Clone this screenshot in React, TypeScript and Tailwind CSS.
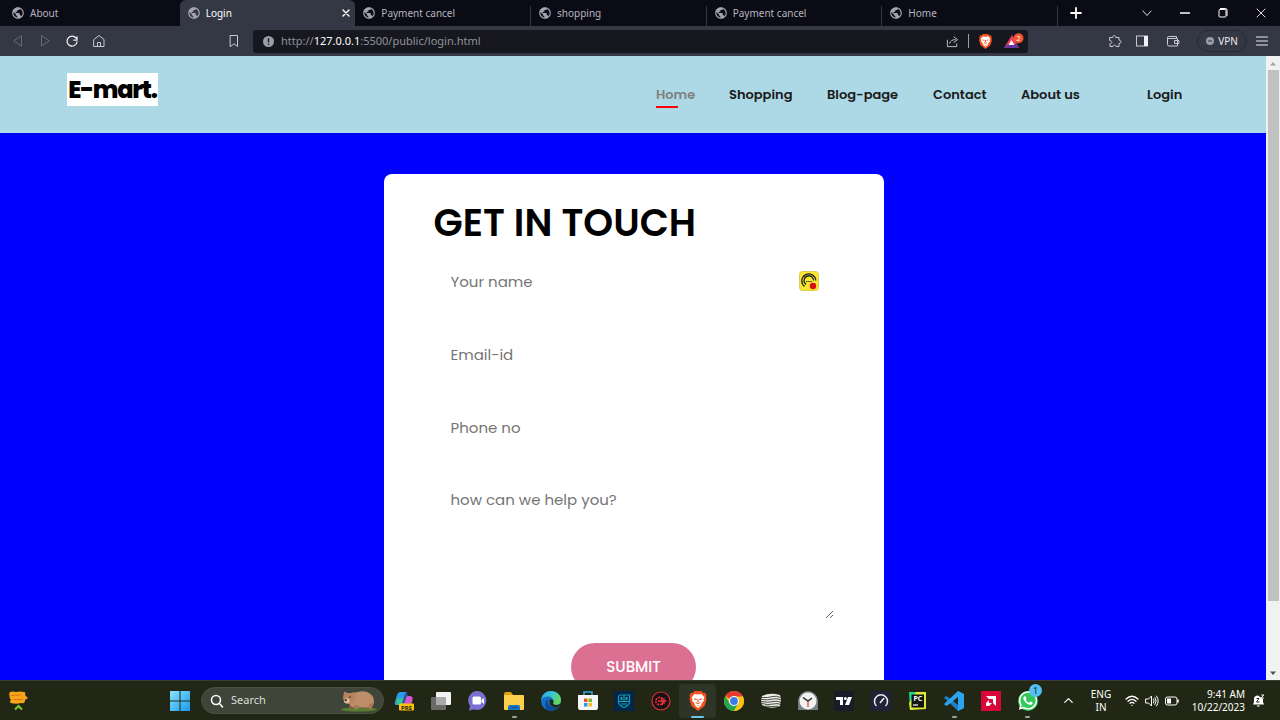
import React from 'react';
import { MdPublic } from 'react-icons/md';
import { FaWhatsapp } from 'react-icons/fa';

const tabs = ['About', 'Login', 'Payment cancel', 'shopping', 'Payment cancel', 'Home'];

const links = [
  { label: 'Home', width: 'w-[73px]' },
  { label: 'Shopping', width: 'w-[98px]' },
  { label: 'Blog-page', width: 'w-[106px]' },
  { label: 'Contact', width: 'w-[88px]' },
  { label: 'About us', width: 'w-[126px]' },
  { label: 'Login', width: 'w-[36px]' },
];

function Line({ d, size = 14, box = 14, width = 1 }: { d: string; size?: number; box?: number; width?: number }) {
  return (
    <svg width={size} height={size} viewBox={`0 0 ${box} ${box}`} fill="none" stroke="currentColor" strokeWidth={width} strokeLinejoin="round" strokeLinecap="round">
      <path d={d} />
    </svg>
  );
}

function IconButton({ label, className, children }: { label: string; className?: string; children: React.ReactNode }) {
  return (
    <button type="button" aria-label={label} className={`flex shrink-0 items-center justify-center ${className ?? ''}`}>
      {children}
    </button>
  );
}

function BraveLion({ size }: { size: number }) {
  return (
    <svg width={size} height={size} viewBox="0 0 20 20">
      <path d="M6.5 0h7l1.800 2 1.700-.2L18.500 4.500l-.5 1.700.6 2L16.500 15 10 20 3.500 15 1.400 8.200l.6-2-.5-1.700L3 1.800 4.700 2z" fill="#f4511e" />
      <path d="M6.500 3 10 3.600 13.500 3 16.500 6.500 15.500 8l.3 2-2.300 2.500-.3 1.800L10 17.200 6.800 14.300l-.3-1.800L4.200 10l.3-2-1-1.500z" fill="#fff" />
      <path d="M5.800 7.200 9 7.900 8.600 9 6.600 8.700zM14.200 7.200 11 7.900 11.400 9l2-.3zM9.600 8h.8l.3 3-1.400 0zM7.600 11 10 12l2.400-1L12 12.300l-2 .8-2-.8zM8.800 14.500h2.400L10 15.500z" fill="#f4511e" />
    </svg>
  );
}

function TabStrip() {
  return (
    <div className="flex h-[26px] shrink-0 items-stretch bg-[#0b0b16] text-[#b5b5bf]">
      <div role="tablist" className="box-content flex w-[1054px] shrink items-stretch pl-1">
        {tabs.map((title, i) => {
          const active = i === 1;
          return (
            <div
              key={i}
              role="tab"
              aria-selected={active}
              className={
                active
                  ? 'flex min-w-0 flex-1 items-center rounded-t-md bg-[#343744] pr-[5px] pl-[7px] text-white'
                  : i === 0
                    ? 'flex min-w-0 flex-1 items-center pr-[5px] pl-[7px]'
                    : 'flex min-w-0 flex-1 items-center bg-[linear-gradient(#343744,#343744)] bg-[length:1px_20px] bg-right-bottom bg-no-repeat pr-[5px] pl-[7px]'
              }
            >
              <MdPublic size={14} className="shrink-0 text-[#a3a5b3]" />
              <span className="ml-[5px] flex-1 truncate text-[10px]">{title}</span>
              {active && (
                <IconButton label="Close tab" className="w-2">
                  <Line d="M1 1 7 7M7 1 1 7" size={8} box={8} width={1.4} />
                </IconButton>
              )}
            </div>
          );
        })}
      </div>
      <IconButton label="New tab" className="w-9 text-white">
        <Line d="M7 2V12M2 7H12" size={14} width={1.8} />
      </IconButton>
      <div className="ml-auto flex text-[#dcdce2]">
        <IconButton label="Search tabs" className="w-[38px]">
          <Line d="M3 5 7 9.500 11 5" />
        </IconButton>
        <IconButton label="Minimize" className="w-[38px] text-white">
          <Line d="M2.500 7H11.500" width={1.3} />
        </IconButton>
        <IconButton label="Restore" className="w-[38px] text-white">
          <Line d="M4 3.500H9Q10 3.500 10 4.500V10Q10 11 9 11H4Q3 11 3 10V4.500Q3 3.500 4 3.500M4.500 2.500H9.500Q11 2.500 11 4V9.500" />
        </IconButton>
        <IconButton label="Close" className="w-[38px]">
          <Line d="M3 3 11 11M11 3 3 11" />
        </IconButton>
      </div>
    </div>
  );
}

function Toolbar() {
  return (
    <div className="flex h-[30px] shrink-0 items-center bg-[#343744] text-[#c8c9d2]">
      <IconButton label="Back" className="ml-[5px] w-[26px] text-[#686a76]">
        <Line d="M10.500 2V12L3 7Z" />
      </IconButton>
      <IconButton label="Forward" className="w-[27px] text-[#686a76]">
        <Line d="M3.500 2V12L11 7Z" />
      </IconButton>
      <IconButton label="Reload" className="w-[27px] text-[#eeeef2]">
        <Line d="M11 4A5 5 0 1 0 12 8M12 3V6.200H8.800" width={1.3} />
      </IconButton>
      <IconButton label="Home page" className="w-[27px]">
        <Line d="M2 5.500 7 1.500 12 5.500V12.500H2ZM5.500 12.500V8.500H8.500V12.500" />
      </IconButton>
      <IconButton label="Bookmark" className="ml-[108px] w-7">
        <Line d="M3.500 1.500H10.500V12.500L7 9.800 3.500 12.500Z" />
      </IconButton>
      <div className="ml-[5px] flex h-[23px] min-w-0 flex-1 items-center rounded-[3px] bg-[#17181f]">
        <svg width="13" height="13" viewBox="0 0 13 13" className="ml-[9px] shrink-0">
          <circle cx="6.500" cy="6.500" r="5.500" fill="#9c9ea9" />
          <path d="M6.500 3.200V7.400M6.500 8.800V10" stroke="#17181f" strokeWidth="1.400" />
        </svg>
        <a href="http://127.0.0.1:5500/public/login.html" className="ml-[6px] flex-1 truncate text-[11px] text-[#8f919c]">
          http://<span className="text-white">127.0.0.1</span>:5500/public/login.html
        </a>
        <IconButton label="Share" className="w-5">
          <Line d="M1.500 5.500V12.500H11.500V9.500M4 9C4.500 6 7 5 10 5M8.500 2 12.500 5 8.500 8" size={13} />
        </IconButton>
        <span className="mx-[6px] h-[14px] w-px bg-[#9c9ea9]" />
        <IconButton label="Brave Shields" className="w-5">
          <BraveLion size={15} />
        </IconButton>
        <IconButton label="Brave Rewards" className="mr-[3px] ml-2 w-[22px]">
          <svg width="20" height="16" viewBox="0 0 20 16">
            <path d="M8 2 15 15H0Z" fill="#ee3f5c" />
            <path d="M0 15 4 11H13L15 15Z" fill="#65359f" />
            <path d="M7.500 7 10.500 12H4.500Z" fill="#fff" />
            <circle cx="14.500" cy="5.300" r="5" fill="#f4552e" />
            <text x="14.500" y="8" textAnchor="middle" fontSize="7" fill="#fff">2</text>
          </svg>
        </IconButton>
      </div>
      <IconButton label="Extensions" className="ml-[74px] w-[26px]">
        <Line d="M2 3.500H4.700C4.500 1 8 1 7.800 3.500H11V6.200C13.600 6 13.600 9.600 11 9.400V12.500H8C8 10.500 5 10.500 5 12.500H2V9.500C4.500 9.500 4.500 6.500 2 6.500Z" />
      </IconButton>
      <IconButton label="Sidebar" className="w-[28px]">
        <svg width="14" height="14" viewBox="0 0 14 14">
          <rect x="1.500" y="2" width="11" height="10" fill="none" stroke="currentColor" />
          <path d="M9 2H13V12H9Z" fill="#f0f0f5" />
        </svg>
      </IconButton>
      <IconButton label="Wallet" className="w-[34px]">
        <Line d="M10.500 4V2.500H2.500Q1.500 2.500 1.500 3.500V10.500Q1.500 12 3 12H11.500V4.500H2M12.500 6.500H8.500V9.500H12.500Z" />
      </IconButton>
      <button type="button" className="ml-[7px] flex h-[22px] w-[50px] items-center justify-center gap-1 rounded-full border border-[#272a34] text-[10px] text-[#ededf2]">
        <svg width="8" height="8" viewBox="0 0 8 8">
          <circle cx="4" cy="4" r="4" fill="#9a9cab" />
          <path d="M2 4H6" stroke="#343744" />
        </svg>
        VPN
      </button>
      <IconButton label="Menu" className="mr-[5px] ml-[2px] w-[26px] text-[#ededf2]">
        <Line d="M1.500 3H12.500M1.500 7H12.500M1.500 11H12.500" />
      </IconButton>
    </div>
  );
}

function LoginPage() {
  const field =
    'block w-full resize-none border-0 bg-transparent px-[17px] text-[15px] text-black outline-none placeholder:text-[#757575] placeholder:opacity-100';
  return (
    <div className="min-w-0 flex-1 overflow-hidden bg-[#0000ff] font-['Poppins','Inter',sans-serif]">
      <header className="flex h-[77px] items-center justify-between bg-[#add8e6] pr-[83px] pl-[67px]">
        <a href="#home" className="mb-[11px] flex h-[33px] w-[91px] items-center justify-center bg-white text-[24px] leading-[33px] font-extrabold tracking-tighter whitespace-nowrap text-black">
          E-mart.
        </a>
        <nav>
          <ul className="flex text-[13px] leading-[21px] font-semibold whitespace-nowrap text-[#1a1a1a]">
            {links.map((link, i) => (
              <li key={link.label} className={link.width}>
                <a href={`#${link.label}`} className={i === 0 ? 'relative text-[#808080]' : ''}>
                  {link.label}
                  {i === 0 && <span className="absolute -bottom-[4px] left-0 h-[2px] w-[22px] bg-[#ff0000]" />}
                </a>
              </li>
            ))}
          </ul>
        </nav>
      </header>
      <main className="flex justify-center pt-[41px] pl-px">
        <form className="w-full max-w-[500px] rounded-lg bg-white px-[50px] pt-[19px] pb-12" onSubmit={(e) => e.preventDefault()}>
          <h1 className="text-[38px] leading-[60px] font-semibold whitespace-nowrap text-black">GET IN TOUCH</h1>
          <div className="mt-1 flex flex-col gap-6">
            <div className="relative">
              <input aria-label="Your name" type="text" placeholder="Your name" className={`${field} h-[49px]`} />
              <svg width="20" height="20" viewBox="0 0 20 20" className="absolute top-[14px] right-[15px]">
                <rect x=".5" y=".5" width="19" height="19" rx="3" fill="#f9e82e" stroke="#dccb4c" />
                <path d="M5.500 15.500A7 7 0 1 1 16.800 9.500M7 13.500A4.800 4.800 0 1 1 14.600 9.500" fill="none" stroke="#222" strokeWidth="1.300" />
                <path d="M7 10.500H13" stroke="#333" strokeDasharray="1.500 .7" />
                <circle cx="14" cy="15" r="3.200" fill="#d90d12" />
              </svg>
            </div>
            <input aria-label="Email-id" type="email" placeholder="Email-id" className={`${field} h-[49px]`} />
            <input aria-label="Phone no" type="tel" placeholder="Phone no" className={`${field} h-[49px]`} />
            <textarea aria-label="how can we help you?" placeholder="how can we help you?" className={`${field} h-[143px] resize! py-3 leading-6`} />
          </div>
          <button type="submit" className="mx-auto mt-6 block h-12 w-[125px] rounded-full bg-[#db7093] text-[15px] font-medium text-white">
            SUBMIT
          </button>
        </form>
      </main>
    </div>
  );
}

function ScrollRail() {
  return (
    <div className="flex w-[14px] shrink-0 flex-col items-center bg-[#f1f1f1]">
      <svg width="14" height="14" viewBox="0 0 14 14"><path d="M4 9.500 7 6 10 9.500Z" fill="#a3a3a3" /></svg>
      <div className="w-[11px] flex-[531] bg-[#c1c1c1]" />
      <div className="flex-[65]" />
      <svg width="14" height="14" viewBox="0 0 14 14"><path d="M4 5.500 7 9 10 5.500Z" fill="#505050" /></svg>
    </div>
  );
}

const apps: { name: string; art: React.ReactNode; mark?: string }[] = [
  {
    name: 'Copilot',
    art: (
      <>
        <path d="M6 1H13L9 14H2Q0 14 1 11L3 4Q4 1 6 1Z" fill="#2e9be8" />
        <path d="M2 8 4 14H9L11 7Z" fill="#36c68f" />
        <path d="M12 1 15 6 12 12H8L11 3Z" fill="#294f9e" />
        <path d="M13 5H16Q20 5 18 11L16 15H9Z" fill="#d159cc" />
        <rect x="5" y="12.500" width="15" height="7" rx="1" fill="#fdc20d" />
        <text x="12.500" y="18.500" textAnchor="middle" fontSize="6" fontWeight="700" fill="#222">PRE</text>
      </>
    ),
  },
  {
    name: 'Task view',
    art: (
      <>
        <rect x="5" y="1" width="15" height="13" rx="1" fill="#f2f2f2" />
        <rect x="0" y="6" width="15" height="13" rx="1" fill="#777" fillOpacity=".85" />
        <path d="M5 6H15V14H5Z" fill="#a9a9a9" />
      </>
    ),
  },
  {
    name: 'Chat',
    art: (
      <>
        <path d="M10 0A9.500 9.500 0 1 1 6 18.500L1 19.500 2 15A9.500 9.500 0 0 1 10 0Z" fill="#7b6fd0" />
        <rect x="4.500" y="5.500" width="8.500" height="8" rx="1.500" fill="#fff" />
        <path d="M13.500 9 16 7V13L13.500 11Z" fill="#fff" />
      </>
    ),
  },
  {
    name: 'File Explorer',
    mark: 'bg-[#a0a09a] w-[5px]',
    art: (
      <>
        <path d="M0 3Q0 1 2 1H7L9 4H18V10H0Z" fill="#dba117" />
        <rect x="0" y="4" width="20" height="15" rx="1" fill="#fdcf4b" />
        <path d="M4 19V16Q4 14 6 14H14Q16 14 16 16V19Z" fill="#1673c4" />
        <path d="M7 16.500H13" stroke="#0b4f92" />
      </>
    ),
  },
  {
    name: 'Edge',
    art: (
      <>
        <defs>
          <linearGradient id="edge-top" x1="0" y1="0" x2="1" y2=".4">
            <stop stopColor="#2a9fe0" />
            <stop offset=".5" stopColor="#35c3d8" />
            <stop offset="1" stopColor="#62d862" />
          </linearGradient>
        </defs>
        <circle cx="10" cy="10" r="10" fill="#1471c4" />
        <path d="M0 9C1 3 5 0 10 0 16 0 20 4 20 9 20 12 18 14 15 14 12 14 11.500 13 12.500 11 13 7 9 5 6 5.500 3 6 1 7 0 9Z" fill="url(#edge-top)" />
        <path d="M7.500 8C5 12 9 18 17 16.500 14 20 9 20.500 6 18.500 3 15 3.500 10 7.500 8Z" fill="#0c4a94" />
        <path d="M9 8.500C12 8 13 10 12.300 11.200 11.500 13 13 14 15.500 14 17 14 18 13.600 19.300 12.600 18.600 14.500 17.600 16 16.500 16.400 11 17.500 7 13 9 8.500Z" fill="#222815" />
      </>
    ),
  },
  {
    name: 'Microsoft Store',
    art: (
      <>
        <path d="M6 5V1H14V5" fill="none" stroke="#2fa7df" strokeWidth="1.500" />
        <path d="M0 4H20V17Q20 19 18 19H2Q0 19 0 17Z" fill="#f4f5f6" />
        <path d="M6 7.500H9.500V11H6Z" fill="#ee5128" />
        <path d="M10.500 7.500H14V11H10.500Z" fill="#7eb91e" />
        <path d="M6 12H9.500V15.500H6Z" fill="#1b9de0" />
        <path d="M10.500 12H14V15.500H10.500Z" fill="#fbb713" />
      </>
    ),
  },
  {
    name: 'Grid app',
    art: (
      <>
        <rect width="20" height="20" fill="#03264b" />
        <path d="M4.500 6Q4.500 4 7 4H15.500V11Q15.500 14 10 16.500 4.500 14 4.500 11ZM10 4V10M4.500 10.500H15.500M7 6.500H8V8.500H7ZM12 6.500H13V8.500H12ZM7 13H13" fill="none" stroke="#159fb8" strokeWidth="1.100" />
      </>
    ),
  },
  {
    name: 'Game tool',
    art: (
      <>
        <circle cx="10" cy="10" r="9" fill="#171014" stroke="#e02f36" strokeWidth="1.200" />
        <circle cx="8.500" cy="10" r="3.600" fill="none" stroke="#e02f36" strokeWidth="1.800" strokeDasharray="2 1" />
        <path d="M7 10H15.500M13 7V13M10.500 6 11.500 14" stroke="#ed3038" strokeWidth="1.300" />
      </>
    ),
  },
  { name: 'Brave', mark: 'bg-[#68c5e8] w-[13px]', art: null },
  {
    name: 'Chrome',
    art: (
      <>
        <circle cx="10" cy="10" r="10" fill="#fbc116" />
        <path d="M10 10 1.340 5A10 10 0 0 1 18.660 5Z" fill="#e53b30" />
        <path d="M1.340 5A10 10 0 0 0 10 20L14.300 12.500 10 10 5.600 12.500Z" fill="#23a455" />
        <path d="M10 5.500H18.900A10 10 0 0 1 10 20L14.300 12.500Z" fill="#fbc116" />
        <circle cx="10" cy="10" r="5" fill="#fff" />
        <circle cx="10" cy="10" r="3.900" fill="#3a7ceb" />
      </>
    ),
  },
  {
    name: 'Waves',
    art: (
      <>
        <path d="M1 5Q9 1 19 4L20 9 19 15Q10 19 1 14L0 9Z" fill="#ecece9" />
        <path d="M0 6.500Q7 7 12 5.500 16 4.500 19 6.500M0 8.500Q7 9.500 12 8 16 7 20 9M0 10.500Q7 12 12 10.500 16 9.500 20 11.500M1 12.500Q7 14.500 12 13 16 12 20 13.500M4 15Q9 16 17 15.200" fill="none" stroke="#25291c" strokeWidth=".8" />
      </>
    ),
  },
  {
    name: 'Clock',
    art: (
      <>
        <path d="M0 10A10 10 0 0 1 20 10V19H0Z" fill="#788087" />
        <circle cx="10" cy="10" r="8.500" fill="#f1f1ef" />
        <path d="M5 6.500 10 10 14 7" fill="none" stroke="#252b2e" strokeWidth="1.500" />
        <path d="M10 10V16" stroke="#db3a32" strokeWidth="1.200" />
      </>
    ),
  },
  {
    name: 'TradingView',
    art: (
      <>
        <rect width="20" height="20" fill="#171b2a" />
        <path d="M2 6H9V14H6V9H2ZM14 6H18L15 14H11Z" fill="#fff" />
        <circle cx="11.400" cy="7.500" r="1.500" fill="#fff" />
      </>
    ),
  },
  {
    name: 'Speedtest',
    art: (
      <>
        <rect width="20" height="20" fill="#202238" />
        <path d="M5.500 15A6.500 6.500 0 1 1 14.500 15" fill="none" stroke="#eee" strokeWidth="1.500" />
        <path d="M9 12 13 7" stroke="#eee" strokeWidth="1.600" />
      </>
    ),
  },
  {
    name: 'PyCharm',
    art: (
      <>
        <path d="M1 1H10L5 19H2Z" fill="#21d789" />
        <path d="M8 1H18V18L2 19 1 12Z" fill="#dce936" />
        <rect x="3.500" y="3.500" width="12.500" height="13" fill="#101510" />
        <text x="9.800" y="10" textAnchor="middle" fontSize="7" fontWeight="700" fill="#fff">PC</text>
        <path d="M5 14H10" stroke="#fff" strokeWidth="1.200" />
      </>
    ),
  },
  {
    name: 'Visual Studio Code',
    mark: 'bg-[#a0a09a] w-[5px]',
    art: (
      <>
        <path d="M14 0 20 3V17L14 20 2 8.500 0 7 2 5 4 6 14 14Z" fill="#1e80ca" />
        <path d="M14 0 20 3V17L14 20V6L4 14 2 15 0 13Z" fill="#2ba4ed" />
      </>
    ),
  },
  {
    name: 'AMD Software',
    art: (
      <>
        <rect width="20" height="20" fill="#d90539" />
        <path d="M5 5H15V15L12 12V8H8ZM8 9V12H11L8 15H5V12Z" fill="#fff" />
      </>
    ),
  },
  { name: 'WhatsApp', mark: 'bg-[#a0a09a] w-[5px]', art: null },
];

function Taskbar() {
  return (
    <footer className="flex h-10 shrink-0 items-center border-t border-[#3b3d36] bg-[#212714] text-white">
      <IconButton label="Widgets" className="ml-2">
        <svg width="21" height="22" viewBox="0 0 21 22">
          <path d="M2 2Q5 1 8 2 12 1 16 2 18 2 17 5L20 8 17 10Q17 14 13 13 8 14.500 3 13 1 12 3 9.500 1 8 1.500 6 .5 3.500 2 2Z" fill="#f8a51d" />
          <path d="M3 5.500 13 5M5 9.500 15 9.500" stroke="#d77a0b" strokeWidth="1.200" />
          <path d="M7 19.500 10.500 16 14 19.500" fill="none" stroke="#76c52d" strokeWidth="2.200" />
        </svg>
      </IconButton>
      <IconButton label="Start" className="ml-[141px] w-5">
        <svg width="20" height="20" viewBox="0 0 20 20">
          <defs>
            <linearGradient id="start" x1="0" y1="0" x2="1" y2="1"><stop stopColor="#8ae5fb" /><stop offset="1" stopColor="#1797f0" /></linearGradient>
          </defs>
          <path d="M0 0H9.500V9.500H0ZM10.500 0H20V9.500H10.500ZM0 10.500H9.500V20H0ZM10.500 10.500H20V20H10.500Z" fill="url(#start)" />
        </svg>
      </IconButton>
      <label className="ml-[11px] flex h-[27px] w-[183px] shrink-0 items-center rounded-full border border-[#4b503e] bg-[#40453a] pl-[8px]">
        <Line d="M9.500 9.500 12.500 13M10.500 6A4.500 4.500 0 1 1 1.500 6 4.500 4.500 0 0 1 10.500 6" width={1.5} />
        <input type="text" aria-label="Search" placeholder="Search" className="ml-[7px] w-[109px] bg-transparent text-[11px] outline-none placeholder:text-[#dedfd9] placeholder:opacity-100" />
        <svg width="38" height="22" viewBox="0 0 38 22" className="shrink-0">
          <ellipse cx="19" cy="19.500" rx="18" ry="2" fill="#56802f" />
          <path d="M9 15V19H13L14 15ZM25 14V19H29L31 13Z" fill="#8b5b40" />
          <path d="M12 4Q20 0 27 2 34 5 34 11 34 17 29 17.500H14Q8 16 9 9Z" fill="#bd8e69" />
          <path d="M14 15V19H18L19 15ZM29 14V19H32L33 13Z" fill="#a9785a" />
          <path d="M4 2Q5 1 7 3H12Q14 1 15 3L16 8 14 13 8 14 4 12 3 8Z" fill="#b5835f" />
          <path d="M4.500 9 7 8 10 10 9 13 6 13.500 4 12Z" fill="#e0bb98" />
          <circle cx="5.700" cy="10.200" r="1.100" fill="#342923" />
          <circle cx="10" cy="7" r=".8" fill="#342923" />
        </svg>
      </label>
      <div className="ml-[2px] flex h-[34px] w-[660px] min-w-0 items-stretch">
        {apps.map((app) => (
          <button
            key={app.name}
            type="button"
            aria-label={app.name}
            className={
              app.name === 'Brave'
                ? 'relative flex flex-1 items-center justify-center rounded bg-[#2e3527]'
                : 'relative flex flex-1 items-center justify-center'
            }
          >
            {app.name === 'Brave' ? (
              <BraveLion size={20} />
            ) : app.name === 'WhatsApp' ? (
              <>
                <span className="flex size-5 items-center justify-center rounded-full bg-[#34c759]">
                  <FaWhatsapp size={21} />
                </span>
                <span className="absolute top-0 right-[4px] flex size-[13px] items-center justify-center rounded-full bg-[#55c0f2] text-[9px] leading-none text-[#12202a]">1</span>
              </>
            ) : (
              <svg width="20" height="20" viewBox="0 0 20 20">{app.art}</svg>
            )}
            {app.mark && <span className={`absolute bottom-0 h-[2px] rounded-full ${app.mark}`} />}
          </button>
        ))}
      </div>
      <div className="ml-auto flex shrink-0 items-center pr-[15px]">
        <IconButton label="Hidden icons" className="w-5">
          <Line d="M3 9 7 5 11 9" size={13} width={1.3} />
        </IconButton>
        <button type="button" className="ml-2 w-[30px] text-center text-[10px] leading-[13px]">
          ENG
          <br />
          IN
        </button>
        <button type="button" aria-label="Network, volume and battery" className="ml-[9px] flex items-center gap-[6px]">
          <Line d="M1 5Q7-.5 13 5M3 7.200Q7 3.500 11 7.200M5 9.200Q7 7.500 9 9.200M7 11.300V11.400" width={1.3} />
          <Line d="M1 5H3.500L6.500 2V12L3.500 9H1ZM8.500 5Q10 7 8.500 9M10 3.500Q12.500 7 10 10.500M11.500 2Q15 7 11.500 12" />
          <svg width="14" height="12" viewBox="0 0 14 12">
            <rect x=".5" y="2" width="11.500" height="8" rx="2" fill="none" stroke="#fff" />
            <path d="M2 3.500H6V8.500H2Z" fill="#fff" />
            <path d="M13 4.500V7.500" stroke="#fff" strokeWidth="1.500" />
          </svg>
        </button>
        <button type="button" className="ml-2 w-[58px] text-right text-[10px] leading-[13px] whitespace-nowrap">
          9:41 AM
          <br />
          10/22/2023
        </button>
        <IconButton label="Notifications" className="ml-[7px]">
          <svg width="13" height="14" viewBox="0 0 13 14">
            <path d="M1 10.500 2 8V5Q2 1.500 6 1.500L11 5V8L12 10.500ZM4.500 11.500H8Q6.500 14 4.500 11.500Z" fill="#fff" />
            <path d="M4.500 4.500H7L4.500 8H7.500" fill="none" stroke="#212714" />
            <path d="M9 1H12L9 4H12" fill="none" stroke="#fff" strokeWidth=".9" />
          </svg>
        </IconButton>
      </div>
    </footer>
  );
}

export default function App() {
  return (
    <div className="flex h-screen flex-col overflow-hidden font-['Segoe_UI','Noto_Sans',sans-serif]">
      <TabStrip />
      <Toolbar />
      <div className="flex min-h-0 flex-1">
        <LoginPage />
        <ScrollRail />
      </div>
      <Taskbar />
    </div>
  );
}
